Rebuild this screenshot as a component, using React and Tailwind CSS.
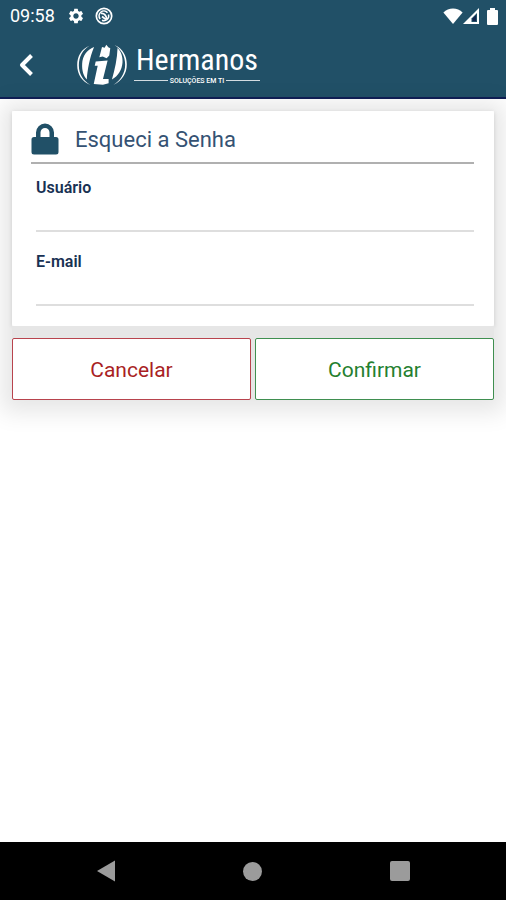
import React, { useState } from 'react';
import { MdSettings } from 'react-icons/md';

const StatusBar = () => (
  <div className="flex h-8 items-center justify-between pl-2.5 pr-2 text-white">
    <div className="flex items-center">
      <span className="text-[18px] leading-5">09:58</span>
      <MdSettings className="ml-3 size-[18px]" />
      <svg viewBox="0 0 18 18" className="ml-2.5 size-[18px]" fill="none" stroke="currentColor">
        <circle cx="9" cy="9" r="7.7" strokeWidth="1.7" />
        <path d="M5.200 12A4.800 4.800 0 0 1 12.500 5.700M13.500 7.500A4.800 4.800 0 0 1 7 13.300" strokeWidth="1.500" />
        <path d="M6 6.500q4-1 6 5.500M7 9.500l4 3" strokeWidth="1.700" />
      </svg>
    </div>
    <div className="flex items-center">
      <svg viewBox="0 0 20 16" className="h-4 w-5" fill="currentColor">
        <path d="M10 16L0.4 4.4C5.5-0.8 14.500-0.8 19.600 4.400z" />
      </svg>
      <svg viewBox="0 0 16 16" className="size-4" fill="currentColor">
        <path d="M16 0v16H0z" />
        <path d="M14 5v9H8.500V10.500z" fill="#215067" />
        <path d="M13 7v6H9.500V10.500z" fill="#10244d" />
      </svg>
      <svg viewBox="0 0 11 17" className="ml-2 h-[17px] w-[11px]" fill="currentColor">
        <path d="M3 0h5v2h2q1 0 1 1v13q0 1-1 1H1q-1 0-1-1V3q0-1 1-1h2z" />
      </svg>
    </div>
  </div>
);

const Logo = () => (
  <div className="flex items-center text-white">
    <svg viewBox="225 125 156 130" className="h-[43px] w-[52px]" fill="currentColor">
      <path d="M265 133C240 143 228 165 228 192C228 219 242 241 268 252C246 238 233 219 233 192C233 166 244 146 265 133z" />
      <path d="M279 137C257 146 244 163 243 188C242 209 247 225 257 235C259 207 266 168 279 137z" />
      <path d="M303 137l8 2 5-9 6 8 6 3-3 22-8 8-12-5-10 2z" />
      <path d="M284 181l36-3-14 56 17 0 0 13-17 4-28-2 12-55-9 0z" />
      <path d="M350 140C360 150 366 164 365 184C363 207 352 225 333 235C342 205 349 172 350 140z" />
      <path d="M341 131C366 142 378 164 378 190C378 217 363 240 338 251C359 238 373 216 373 190C373 164 361 145 341 131z" />
    </svg>
    <div className="ml-1.5 flex flex-col items-center">
      <span className="font-['Roboto_Condensed','Liberation_Sans_Narrow','Roboto',sans-serif] text-[30px] leading-8">
        Hermanos
      </span>
      <div className="flex w-[126px] items-center gap-0.5">
        <span className="h-px flex-1 bg-white/80" />
        <span className="text-[7px] font-medium leading-[10px]">SOLUÇÕES EM TI</span>
        <span className="h-px flex-1 bg-white/80" />
      </div>
    </div>
  </div>
);

const Field = ({ id, label, type, value, onChange }) => (
  <div className="pl-[5px]">
    <label htmlFor={id} className="block text-base leading-5 font-semibold text-[#183153]">
      {label}
    </label>
    <input
      id={id}
      name={id}
      type={type}
      value={value}
      onChange={onChange}
      className="block h-[34px] w-full border-b-2 border-[#dedede] bg-transparent text-base text-[#183153] outline-none focus:border-[#215067]"
    />
  </div>
);

const NavigationBar = () => (
  <nav className="mt-auto flex h-[58px] items-center justify-around bg-black px-8 text-[#9b9b9b]">
    <button type="button" aria-label="Voltar">
      <svg viewBox="0 0 20 22" className="h-[22px] w-5" fill="currentColor">
        <path d="M19 0.500v21L1 11z" />
      </svg>
    </button>
    <button type="button" aria-label="Início" className="size-[19px] rounded-full bg-[#9b9b9b]" />
    <button type="button" aria-label="Recentes" className="size-5 rounded-xs bg-[#9b9b9b]" />
  </nav>
);

export default function App() {
  const [form, setForm] = useState({ usuario: '', email: '' });

  const handleChange = (e) => {
    const { name, value } = e.target;
    setForm(prev => ({ ...prev, [name]: value }));
  };

  const handleSubmit = (e) => {
    e.preventDefault();
  };

  return (
    <div className="flex min-h-screen flex-col bg-white font-['Roboto',sans-serif]">
      <header className="border-b-2 border-[#101f56] bg-[#215067]">
        <StatusBar />
        <div className="flex h-[65px] items-center pl-4">
          <button type="button" aria-label="Voltar" className="mr-9 text-white">
            <svg viewBox="0 0 24 24" className="size-6" fill="none" stroke="currentColor" strokeWidth="4" strokeLinejoin="round">
              <path d="M15.500 2.500L6 12l9.500 9.500" />
            </svg>
          </button>
          <Logo />
        </div>
      </header>

      <form onSubmit={handleSubmit} className="px-3 pt-3">
        <div className="shadow-[0_2px_22px_10px_rgba(0,0,0,0.1)]">
          <section className="rounded-xs bg-white pb-5 pl-[19px] pr-5 shadow-[0_1px_4px_rgba(0,0,0,0.12)]">
            <div className="flex h-[53px] items-center border-b-2 border-[#b0b0b0] pt-1">
              <svg viewBox="0 0 28 32" className="h-8 w-7" fill="#215067">
                <path d="M3 14h2V9.500a9 9 0 0 1 18 0V14h2q2.500 0 2.500 2.500v12.500q0 2.500-2.500 2.500H3Q0.500 31.500 0.500 29V16.500Q0.500 14 3 14zM9.500 14h9V9.500a4.500 4.500 0 0 0-9 0z" />
              </svg>
              <h1 className="ml-4 pt-0.5 text-[22px] leading-7 text-[#355273]">Esqueci a Senha</h1>
            </div>
            <div className="flex flex-col gap-5 pt-3.5">
              <Field id="usuario" label="Usuário" type="text" value={form.usuario} onChange={handleChange} />
              <Field id="email" label="E-mail" type="email" value={form.email} onChange={handleChange} />
            </div>
          </section>
          <div className="grid grid-cols-2 gap-1 bg-[#e6e6e6] pt-3">
            <button type="button" className="h-[62px] rounded-xs border border-[#b8434d] bg-white pt-1 text-[21px] text-[#a91f24]">
              Cancelar
            </button>
            <button type="submit" className="h-[62px] rounded-xs border border-[#3f8f50] bg-white pt-1 text-[21px] text-[#24802f]">
              Confirmar
            </button>
          </div>
        </div>
      </form>

      <NavigationBar />
    </div>
  );
}
